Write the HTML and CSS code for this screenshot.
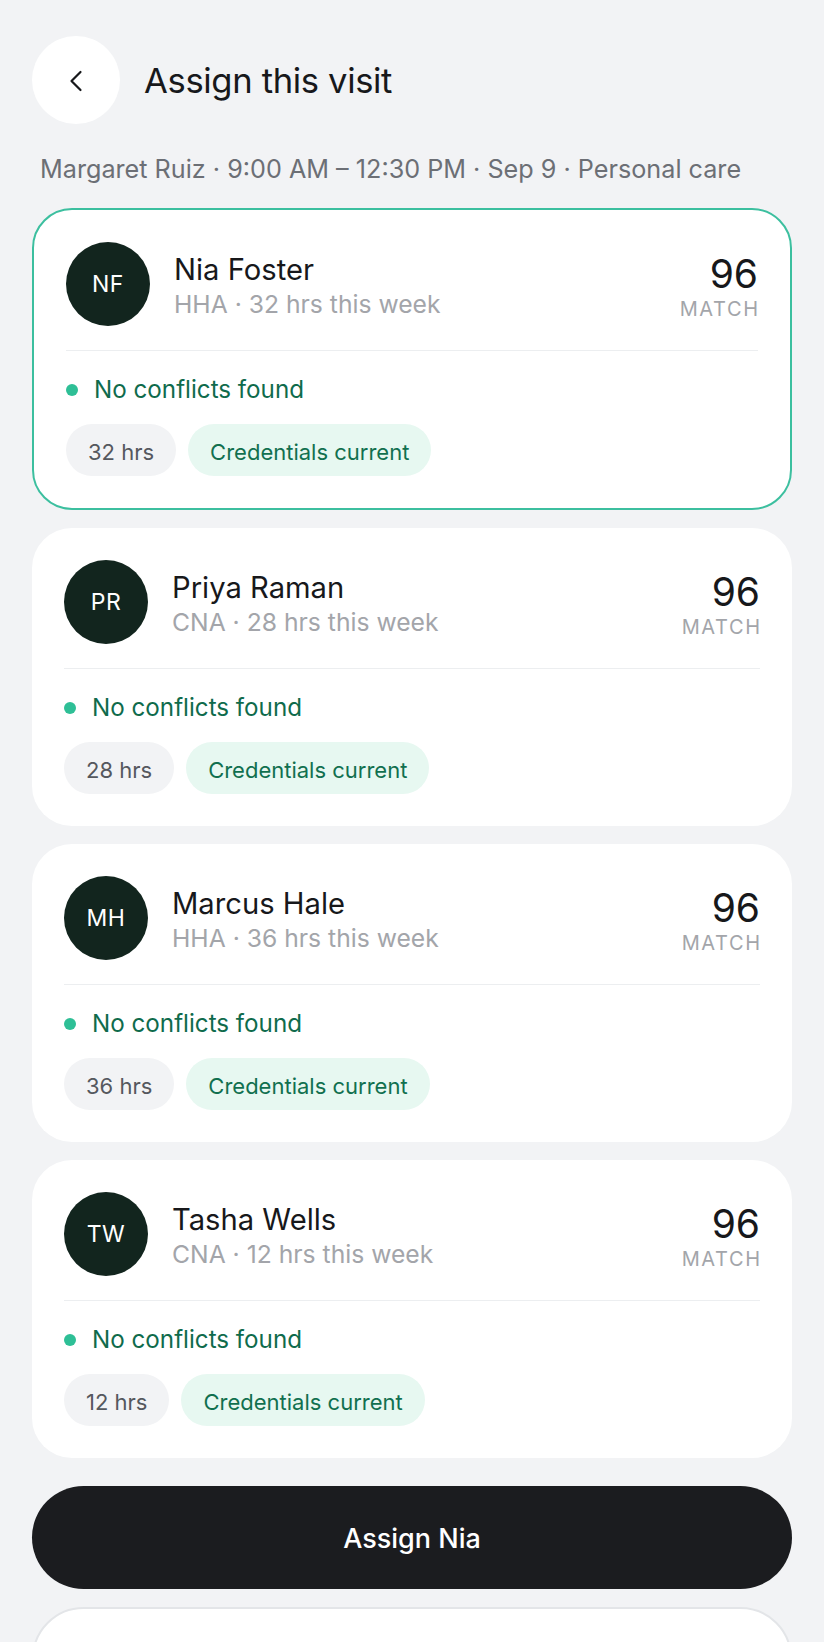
FILE: index.html
```html
<!DOCTYPE html>
<html lang="en">
<head>
<meta charset="utf-8">
<title>Assign this visit</title>
<link rel="stylesheet" href="styles.css">
</head>
<body>
<div class="screen">
  <header class="top">
    <button class="back" aria-label="Back">
      <svg width="24" height="24" viewBox="0 0 24 24" fill="none" stroke="currentColor" stroke-width="2.2" stroke-linecap="round" stroke-linejoin="round"><path d="M16.5 3 L7.5 12 L16.5 21"/></svg>
    </button>
    <h1 class="title">Assign this visit</h1>
  </header>
  <p class="meta">Margaret Ruiz · 9:00 AM – 12:30 PM · Sep 9 · Personal care</p>

  <div class="list">
    <article class="card selected">
      <div class="card-head">
        <div class="avatar">NF</div>
        <div class="who">
          <div class="name">Nia Foster</div>
          <div class="role">HHA · 32 hrs this week</div>
        </div>
        <div class="score"><div class="num">96</div><div class="lbl">MATCH</div></div>
      </div>
      <div class="card-body">
        <div class="status"><span class="dot"></span>No conflicts found</div>
        <div class="chips"><span class="chip">32 hrs</span><span class="chip ok">Credentials current</span></div>
      </div>
    </article>

    <article class="card">
      <div class="card-head">
        <div class="avatar">PR</div>
        <div class="who">
          <div class="name">Priya Raman</div>
          <div class="role">CNA · 28 hrs this week</div>
        </div>
        <div class="score"><div class="num">96</div><div class="lbl">MATCH</div></div>
      </div>
      <div class="card-body">
        <div class="status"><span class="dot"></span>No conflicts found</div>
        <div class="chips"><span class="chip">28 hrs</span><span class="chip ok">Credentials current</span></div>
      </div>
    </article>

    <article class="card">
      <div class="card-head">
        <div class="avatar">MH</div>
        <div class="who">
          <div class="name">Marcus Hale</div>
          <div class="role">HHA · 36 hrs this week</div>
        </div>
        <div class="score"><div class="num">96</div><div class="lbl">MATCH</div></div>
      </div>
      <div class="card-body">
        <div class="status"><span class="dot"></span>No conflicts found</div>
        <div class="chips"><span class="chip">36 hrs</span><span class="chip ok">Credentials current</span></div>
      </div>
    </article>

    <article class="card">
      <div class="card-head">
        <div class="avatar">TW</div>
        <div class="who">
          <div class="name">Tasha Wells</div>
          <div class="role">CNA · 12 hrs this week</div>
        </div>
        <div class="score"><div class="num">96</div><div class="lbl">MATCH</div></div>
      </div>
      <div class="card-body">
        <div class="status"><span class="dot"></span>No conflicts found</div>
        <div class="chips"><span class="chip">12 hrs</span><span class="chip ok">Credentials current</span></div>
      </div>
    </article>
  </div>

  <div class="actions">
    <button class="primary">Assign Nia</button>
    <button class="secondary" aria-label="More options"></button>
  </div>
</div>
</body>
</html>
```

FILE: styles.css
```css
* { box-sizing: border-box; }
html, body { margin: 0; padding: 0; }
body {
  background: #f2f3f5;
  font-family: Inter, "Noto Sans", "Liberation Sans", sans-serif;
  color: #17181b;
}
.screen {
  height: 100vh;
  overflow: hidden;
  padding: 36px 32px 0;
}
.top {
  display: flex;
  align-items: center;
  gap: 24px;
}
.back {
  width: 88px;
  height: 88px;
  border-radius: 50%;
  border: 0;
  background: #ffffff;
  color: #17181b;
  display: flex;
  align-items: center;
  justify-content: center;
  padding: 0;
  flex: none;
}
.back svg { display: block; margin-top: 2px; }
.title {
  margin: 0;
  font-size: 34.6px;
  line-height: 44px;
  font-weight: 400;
  letter-spacing: -0.01em;
}
.meta {
  margin: 28px 0 0 8px;
  font-size: 25.2px;
  line-height: 34px;
  color: #6c6f75;
}
.list {
  margin-top: 22px;
  display: flex;
  flex-direction: column;
  gap: 18px;
}
.card {
  background: #ffffff;
  border-radius: 40px;
  padding: 32px;
}
.card.selected {
  border: 2px solid #3cbf9f;
}
.card-head {
  display: flex;
  align-items: center;
  gap: 24px;
  padding-bottom: 24px;
  border-bottom: 1px solid #eceef0;
}
.avatar {
  width: 84px;
  height: 84px;
  border-radius: 50%;
  background: #12251e;
  color: #ffffff;
  flex: none;
  display: flex;
  align-items: center;
  justify-content: center;
  font-size: 23px;
  font-weight: 400;
  letter-spacing: 0.02em;
}
.who { flex: 1; min-width: 0; padding-top: 4px; }
.name {
  font-size: 29.2px;
  line-height: 36px;
  font-weight: 400;
  color: #17181b;
}
.role {
  font-size: 24.7px;
  line-height: 32px;
  color: #a3a5aa;
}
.score {
  align-self: flex-start;
  margin-top: 12px;
  text-align: right;
}
.num {
  font-size: 39px;
  line-height: 40px;
  font-weight: 400;
  color: #17181b;
}
.lbl {
  font-size: 20px;
  line-height: 30px;
  letter-spacing: 0.08em;
  margin-right: -0.08em;
  color: #a3a5aa;
}
.card-body { padding-top: 23px; }
.status {
  display: flex;
  align-items: center;
  gap: 16px;
  font-size: 24.2px;
  line-height: 32px;
  font-weight: 400;
  color: #0f6b4c;
}
.dot {
  width: 12px;
  height: 12px;
  border-radius: 50%;
  background: #2ebf96;
  flex: none;
}
.chips {
  margin-top: 18px;
  display: flex;
  gap: 12px;
}
.chip {
  height: 52px;
  display: inline-flex;
  align-items: center;
  padding: 3px 22px 0;
  border-radius: 26px;
  background: #f2f3f5;
  color: #55585e;
  font-size: 22px;
}
.chip.ok {
  background: #e7f8f1;
  color: #11704f;
}
.actions {
  margin-top: 28px;
  display: flex;
  flex-direction: column;
  gap: 18px;
}
.primary, .secondary {
  height: 103px;
  border-radius: 52px;
  font-family: inherit;
  font-size: 27px;
  font-weight: 500;
  width: 100%;
}
.primary {
  border: 0;
  padding-top: 3px;
  background: #1b1c1f;
  color: #ffffff;
}
.secondary {
  border: 2px solid #e3e5e8;
  background: #ffffff;
  color: #17181b;
}
```
